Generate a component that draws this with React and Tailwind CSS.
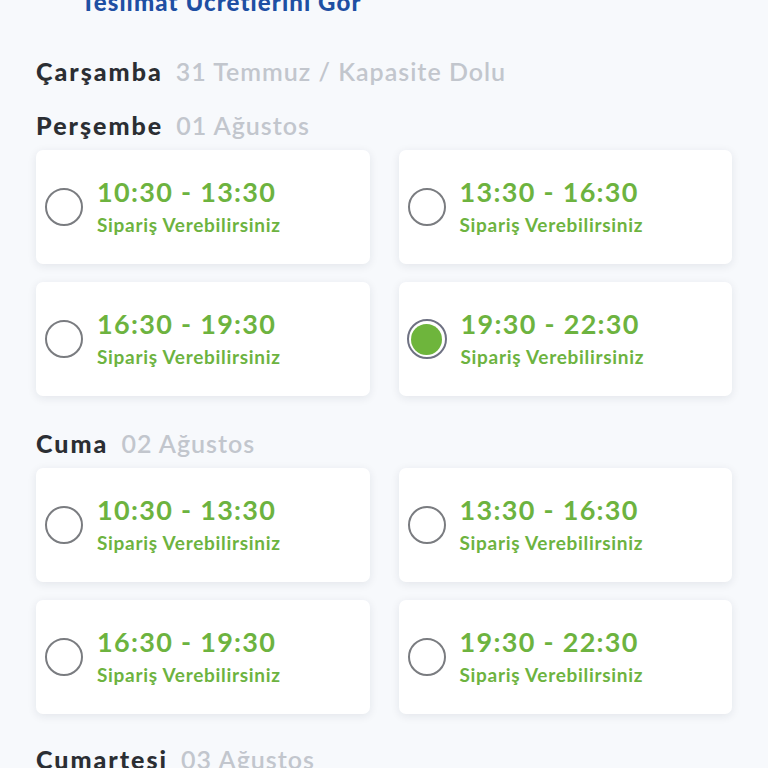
const DAYS = [
  { name: 'Çarşamba', date: '31 Temmuz / Kapasite Dolu', slots: [] },
  {
    name: 'Perşembe',
    date: '01 Ağustos',
    slots: ['10:30 - 13:30', '13:30 - 16:30', '16:30 - 19:30', '19:30 - 22:30'],
    selected: 3,
  },
  {
    name: 'Cuma',
    date: '02 Ağustos',
    slots: ['10:30 - 13:30', '13:30 - 16:30', '16:30 - 19:30', '19:30 - 22:30'],
  },
  { name: 'Cumartesi', date: '03 Ağustos', slots: [] },
]

function Radio({ checked }) {
  if (checked) {
    return (
      <span className="w-[40px] h-[40px] rounded-full border-2 border-[#6f7283] bg-white flex items-center justify-center flex-shrink-0 -ml-[1px]">
        <span className="w-[31px] h-[31px] rounded-full bg-[#6eb53c]" />
      </span>
    )
  }
  return <span className="w-[38px] h-[38px] rounded-full border-2 border-[#7a7c80] bg-white flex-shrink-0" />
}

function SlotCard({ time, checked }) {
  return (
    <div className="h-[114px] rounded-[7px] bg-white shadow-[0_2px_10px_rgba(20,30,60,0.09)] flex items-center pl-[9px]">
      <Radio checked={checked} />
      <div className="ml-[14px] text-[#6db33f]">
        <div className="text-[27px] leading-[28px] font-bold tracking-[1.3px]">{time}</div>
        <div className="text-[19px] leading-[24px] font-bold tracking-[0.7px] mt-[7px]">Sipariş Verebilirsiniz</div>
      </div>
    </div>
  )
}

export default function App() {
  return (
    <div
      className="min-h-[768px] h-[768px] overflow-hidden bg-[#f7f9fc] px-9"
      style={{ fontFamily: 'Lato, "Noto Sans", sans-serif' }}
    >
      <div className="-mt-[13px] pl-[45px] text-[24px] leading-[30px] font-black tracking-[1.1px] text-[#1e4fa3]">
        Teslimat Ücretlerini Gör
      </div>

      <div className="mt-[39px]">
        {DAYS.map((day, dayIndex) => (
          <div key={day.name} className={dayIndex === 0 ? '' : day.slots.length ? (dayIndex === 1 ? 'mt-[24px]' : 'mt-[32px]') : 'mt-[30px]'}>
            <div className="flex items-baseline gap-[13px] text-[25px] leading-[30px]">
              <span className="font-black text-[#2b2e33] tracking-[2px]">{day.name}</span>
              <span className="font-semibold text-[#c2c6cd] tracking-[1px]">{day.date}</span>
            </div>
            {day.slots.length > 0 && (
              <div className="mt-[10px] grid grid-cols-2 gap-x-[29px] gap-y-[18px]">
                {day.slots.map((slot, i) => (
                  <SlotCard key={slot} time={slot} checked={day.selected === i} />
                ))}
              </div>
            )}
          </div>
        ))}
      </div>
    </div>
  )
}
